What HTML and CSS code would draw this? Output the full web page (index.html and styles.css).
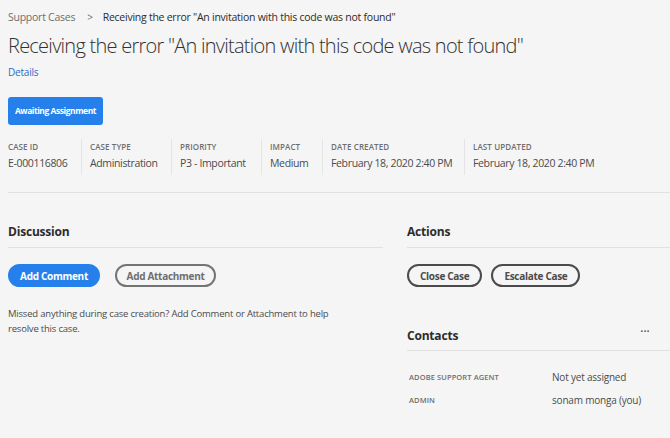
FILE: index.html
```html
<!DOCTYPE html>
<html>
<head>
<meta charset="utf-8">
<link rel="stylesheet" href="styles.css">
</head>
<body>
<div class="page">
  <nav class="crumbs"><span class="crumb-link">Support Cases</span><span class="crumb-sep">&gt;</span><span class="crumb-current">Receiving the error "An invitation with this code was not found"</span></nav>
  <h1 class="title">Receiving the error "An invitation with this code was not found"</h1>
  <a class="details">Details</a>
  <div class="status">Awaiting Assignment</div>
  <div class="meta">
    <div class="meta-item w1"><div class="meta-label">CASE ID</div><div class="meta-value">E-000116806</div></div>
    <div class="meta-item w2"><div class="meta-label">CASE TYPE</div><div class="meta-value">Administration</div></div>
    <div class="meta-item w3"><div class="meta-label">PRIORITY</div><div class="meta-value">P3 - Important</div></div>
    <div class="meta-item w4"><div class="meta-label">IMPACT</div><div class="meta-value">Medium</div></div>
    <div class="meta-item w5"><div class="meta-label">DATE CREATED</div><div class="meta-value">February 18, 2020 2:40 PM</div></div>
    <div class="meta-item w6"><div class="meta-label">LAST UPDATED</div><div class="meta-value">February 18, 2020 2:40 PM</div></div>
  </div>
  <div class="columns">
    <section class="left">
      <h2 class="section-title">Discussion</h2>
      <div class="btn-row">
        <button class="btn primary">Add Comment</button>
        <button class="btn secondary">Add Attachment</button>
      </div>
      <p class="hint">Missed anything during case creation? Add Comment or Attachment to help<br>resolve this case.</p>
    </section>
    <section class="right">
      <h2 class="section-title">Actions</h2>
      <div class="btn-row">
        <button class="btn outline">Close Case</button>
        <button class="btn outline">Escalate Case</button>
      </div>
      <div class="contacts-head"><h2 class="section-title flat">Contacts</h2><span class="more">&bull;&bull;&bull;</span></div>
      <div class="contacts">
        <div class="c-label">ADOBE SUPPORT AGENT</div><div class="c-value">Not yet assigned</div>
        <div class="c-label">ADMIN</div><div class="c-value">sonam monga (you)</div>
      </div>
    </section>
  </div>
</div>
</body>
</html>
```
FILE: styles.css
```css
* { box-sizing: border-box; }
html, body { margin: 0; padding: 0; background: #f5f5f5; }
body { font-family: "Open Sans", "Noto Sans", sans-serif; color: #2c2c2c; width: 670px; height: 438px; overflow: hidden; }
.page { padding: 10px 0 0 8px; }
.crumbs { font-size: 10.5px; line-height: 14px; display: flex; align-items: center; letter-spacing: -0.25px; white-space: nowrap; }
.crumb-link { color: #6e6e6e; }
.crumb-sep { color: #6e6e6e; margin: 0 10px 0 12px; font-size: 10px; }
.crumb-current { color: #2c2c2c; }
.title { font-weight: 300; font-size: 20px; line-height: 26px; margin: 9px 0 0 0; color: #323232; letter-spacing: -0.75px; white-space: nowrap; }
.details { display: block; color: #2d6bc9; font-size: 10px; line-height: 14px; margin-top: 6px; letter-spacing: -0.2px; }
.status { display: inline-block; margin-top: 18px; background: #2680eb; color: #fff; font-size: 8.5px; font-weight: 700; height: 28px; line-height: 28px; width: 95px; text-align: center; letter-spacing: -0.45px; border-radius: 3px; white-space: nowrap; }
.meta { display: flex; margin-top: 14px; padding-bottom: 17px; border-bottom: 1px solid #e1e1e1; white-space: nowrap; }
.meta-item { border-left: 1px solid #e4e4e4; padding-left: 8px; }
.meta-item.w1 { border-left: none; padding-left: 0; width: 73px; }
.w2 { width: 90px; }
.w3 { width: 90px; }
.w4 { width: 61px; }
.w5 { width: 142px; }
.w6 { flex: 1; }
.meta-label { font-size: 8px; line-height: 12px; color: #6e6e6e; font-weight: 600; letter-spacing: 0.1px; padding-top: 2px; }
.meta-value { font-size: 10.5px; line-height: 16px; color: #4b4b4b; margin-top: 2px; padding-bottom: 4px; letter-spacing: -0.35px; }
.columns { display: flex; gap: 24px; margin-top: 31px; }
.left { width: 375px; }
.right { flex: 1; }
.section-title { font-size: 12px; font-weight: 700; line-height: 16px; margin: 0; padding-bottom: 7px; border-bottom: 1px solid #e1e1e1; color: #2c2c2c; letter-spacing: -0.2px; }
.section-title.flat { border-bottom: none; padding: 0; }
.btn-row { display: flex; gap: 15px; margin-top: 16px; }
.right .btn-row { gap: 9px; }
.btn { font-family: inherit; font-size: 10px; font-weight: 700; height: 23px; border-radius: 12px; padding: 0 11px; letter-spacing: -0.3px; cursor: pointer; white-space: nowrap; }
.primary { background: #2680eb; color: #fff; border: 2px solid #2680eb; width: 92px; padding: 0; }
.secondary { background: transparent; color: #6e6e6e; border: 2px solid #747474; width: 101px; padding: 0; }
.outline { background: transparent; color: #4b4b4b; border: 2px solid #4b4b4b; }
.hint { font-size: 9.5px; line-height: 15px; color: #4b4b4b; margin: 19px 0 0 0; letter-spacing: -0.2px; white-space: nowrap; }
.contacts-head { display: flex; justify-content: space-between; align-items: center; margin-top: 41px; padding-bottom: 6px; border-bottom: 1px solid #e1e1e1; }
.more { font-size: 7px; color: #4b4b4b; letter-spacing: 0.5px; margin-right: 20px; margin-top: -10px; }
.contacts { display: grid; grid-template-columns: 145px 1fr; row-gap: 9px; margin-top: 19px; }
.c-label { font-size: 7.5px; font-weight: 600; color: #6e6e6e; line-height: 14px; padding-left: 2px; letter-spacing: 0.1px; }
.c-value { font-size: 10px; color: #4b4b4b; line-height: 14px; letter-spacing: -0.2px; }
```
